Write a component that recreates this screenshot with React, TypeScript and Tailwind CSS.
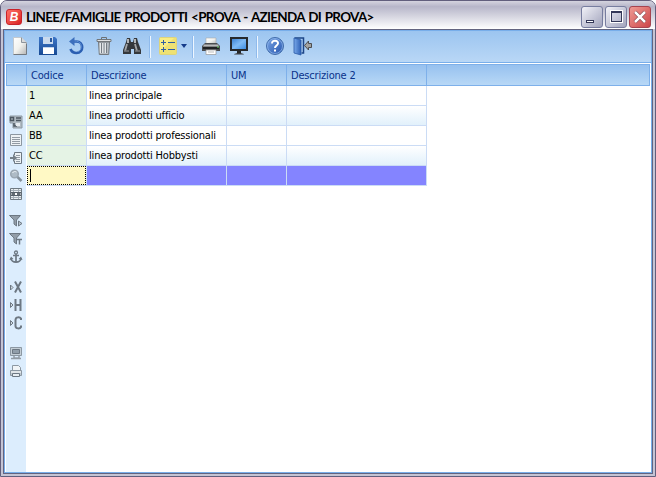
import React from "react";

type IconProps = { children: React.ReactNode };

const ToolIcon = ({ children }: IconProps) => (
  <button className="flex h-5 w-7 shrink-0 items-center justify-center">
    <svg width="20" height="20" viewBox="0 0 20 20" fill="none">{children}</svg>
  </button>
);

const SideIcon = ({ children }: IconProps) => (
  <button className="flex h-[18px] w-5 shrink-0 items-center justify-center">
    <svg width="14" height="14" viewBox="0 0 14 14" fill="none" stroke="#6d7883">{children}</svg>
  </button>
);

const Separator = () => (
  <div className="flex h-[22px] w-2 shrink-0 justify-center">
    <div className="w-px bg-[#8fbaec]" />
    <div className="w-px bg-[#eef6ff]" />
  </div>
);

const Gradients = () => (
  <svg width="0" height="0" className="absolute">
    <defs>
      <linearGradient id="paper" x1="0" y1="0" x2="1" y2="1">
        <stop stopColor="#ffffff" /><stop offset=".5" stopColor="#f2f2ee" /><stop offset="1" stopColor="#b5b5b5" />
      </linearGradient>
      <linearGradient id="blue" x1="0" y1="0" x2="0" y2="1">
        <stop stopColor="#3d76c8" /><stop offset="1" stopColor="#174993" />
      </linearGradient>
      <linearGradient id="help" x1="0" y1="0" x2="1" y2="1">
        <stop stopColor="#7ba6e4" /><stop offset="1" stopColor="#2454ad" />
      </linearGradient>
      <linearGradient id="screen" x1="0" y1="0" x2="1" y2="1">
        <stop stopColor="#3e83d4" /><stop offset=".5" stopColor="#7fbaf4" /><stop offset="1" stopColor="#3d8de3" />
      </linearGradient>
      <linearGradient id="door" x1="0" y1="0" x2="1" y2="0">
        <stop stopColor="#79a9ea" /><stop offset="1" stopColor="#2d60b5" />
      </linearGradient>
    </defs>
  </svg>
);

const Toolbar = () => (
  <div className="flex h-[31px] shrink-0 items-start bg-linear-to-b from-[#9cc5f0] to-[#b9d7f6] pt-[5px] pl-px">
    <ToolIcon>
      <path d="M3.5 1.5h8l5 5v12h-13z" fill="url(#paper)" stroke="#c3c9cf" />
      <path d="M11.5 1.5v5h5" fill="#d8dadc" stroke="#8d949c" />
      <path d="M3.5 18.5h13v-11" stroke="#737980" />
    </ToolIcon>
    <ToolIcon>
      <path d="M1 1h16l2 2v16H1z" fill="url(#blue)" />
      <path d="M5 1h10v7H5z" fill="#c9daee" /><path d="M12 2h2v4h-2z" fill="#28589e" />
      <path d="M5 11h11v7H5z" fill="#fff" /><path d="M5 11h11v1H5z" fill="#c1d4ed" />
    </ToolIcon>
    <ToolIcon>
      <path d="M7 5.5h3.5c7.5 0 7.5 11.5 0 11.5-3.5 0-5-1.5-6-4" stroke="#2b5fb2" strokeWidth="2.7" />
      <path d="M8 5c9-.5 9 9 4 10.5" stroke="#6b99da" strokeWidth=".8" />
      <path d="M8.5 1v9L3 5.5z" fill="#3c6fbd" />
    </ToolIcon>
    <ToolIcon>
      <path d="M4.5 6h11l-.8 12.5H5.3z" fill="#b7bdc3" stroke="#73797f" />
      <path d="M7.5 7v10m2.5-10v10m2.5-10v10" stroke="#757c84" />
      <path d="M6.3 7v10m2.5-10v10m2.5-10v10" stroke="#f1f3f4" />
      <path d="M3 3.5h14v2H3z" fill="#e1e3e5" stroke="#73777b" />
      <path d="M7.5 3V1.5h5V3" stroke="#6c7175" />
    </ToolIcon>
    <ToolIcon>
      <path d="M5 2h3l1 4h2l1-4h3l1 4 3 8v4h-7v-5H9v5H1v-4l3-8z" fill="#35383c" />
      <path d="M5 3h2v4H5zM12 3h2v4h-2z" fill="#b3b5b7" />
      <path d="M5 8 3 15m10-7 2 7" stroke="#a4a6a8" strokeWidth="1.8" />
      <path d="M2 15h5m6 0h5" stroke="#777a7e" strokeWidth="1.5" />
    </ToolIcon>
    <Separator />
    <button className="ml-1 flex h-5 w-[31px] shrink-0 items-center">
      <svg width="20" height="20" viewBox="0 0 20 20" fill="none">
        <rect x="1.5" y="1.5" width="17" height="17" rx="1" fill="#f9ed83" stroke="#ddd47d" />
        <path d="M2 16 16 2h2v16H2z" fill="#eee173" />
        <path d="M3 6.5h5M5.5 4v5M3 13.5h5M5.5 11v5M10 6.5h7m-7 7h7" stroke="#315fa2" />
      </svg>
      <svg width="6" height="4" viewBox="0 0 6 4" className="ml-[3px]"><path d="M0 0h6L3 4z" fill="#153b8a" /></svg>
    </button>
    <Separator />
    <ToolIcon>
      <path d="M5 2h10v6H5z" fill="url(#paper)" stroke="#aaa" strokeWidth=".6" />
      <path d="M4 7h12l3 3v5H1v-5z" fill="#4c4e51" />
      <path d="M3 8.5h14l1 2H2z" fill="#b9babb" /><path d="M2 12h16" stroke="#1f2123" strokeWidth="2" />
      <path d="M5 14h10v4.5H5z" fill="#fff" stroke="#999" strokeWidth=".7" /><path d="M7 16h6" stroke="#bbb" />
      <path d="M16 11h2" stroke="#6fdd6b" />
    </ToolIcon>
    <ToolIcon>
      <path d="M1 1h18v14H1z" fill="#26282b" /><path d="M3 3h14v10H3z" fill="url(#screen)" />
      <path d="M8 15h4v3H8z" fill="#25272a" /><path d="M5 18.5c1-2 9-2 10 0z" fill="#3b3c3f" />
    </ToolIcon>
    <Separator />
    <ToolIcon>
      <circle cx="10" cy="10" r="8.5" fill="url(#help)" stroke="#426dab" />
      <circle cx="10" cy="10" r="7.5" stroke="#91b7ec" strokeWidth=".7" />
      <path d="M7 7.5c0-4 6.5-3.5 6 0-.2 2-3 2-3 4.5" stroke="#fff" strokeWidth="2" /><path d="M9 13.5h2v2H9z" fill="#fff" />
    </ToolIcon>
    <ToolIcon>
      <path d="M1.5 2h9v15h-2" stroke="#1d4587" strokeWidth="1.5" /><path d="M1 2l7 2v15l-7-2z" fill="url(#door)" stroke="#2959a6" strokeWidth=".8" />
      <path d="M18.5 7.5v4h-3V14l-4-4.5 4-4.5v2.5z" fill="#a2a2a0" stroke="#4c4d50" />
    </ToolIcon>
  </div>
);

const Sidebar = () => (
  <div className="flex w-5 shrink-0 flex-col bg-[#dcedfd] pt-[27px]">
    <SideIcon>
      <path d="M1 1h12v12H4V8H1z" fill="#b1bbc3" stroke="#8d99a3" />
      <path d="M1.5 2.5h3v3h-3zM7 3h5M7 5.5h5M5 8v3h3" stroke="#4d5862" strokeWidth="1.5" />
      <path d="M7 8h4v3H7z" fill="#e6ecf0" stroke="none" />
    </SideIcon>
    <SideIcon><path d="M1.5 1.5h11v11h-11z" fill="#edf2f5" stroke="#8c97a1" /><path d="M3 4.5h8m-8 2h8m-8 2h8m-8 2h8" stroke="#929ba4" /></SideIcon>
    <SideIcon>
      <path d="M5.5 4V1.5h7v11h-7V10" fill="#edf2f5" /><path d="M7 4.5h4m-4 2h4m-4 2h4m-4 2h4" stroke="#929ba4" /><path d="M1 6h3V3l4 4-4 4V8H1z" fill="#758089" stroke="none" />
    </SideIcon>
    <SideIcon><circle cx="5.5" cy="5" r="3.8" fill="#aebbc6" stroke="#9ba7b2" strokeWidth="1.5" /><path d="m8.5 8 4 4" stroke="#84909b" strokeWidth="2.5" /><path d="M3.5 4c1-2 3-1.5 4-1" stroke="#eff5f8" /></SideIcon>
    <SideIcon>
      <path d="M1.5 1.5h11v11h-11z" fill="#e9eef1" stroke="#6e7982" /><path d="M2 3.5h10m-10 7h10M4.5 2v10m5-10v10" stroke="#a5afb7" /><path d="M2 5.5h10v3H2z" fill="#fff" stroke="#56606a" /><path d="M3 7h3m2 0h3" stroke="#303c46" strokeWidth="1.5" />
    </SideIcon>
    <div className="h-[9px]" />
    <SideIcon><path d="M.5 1.5h11L7.5 6v6L5 10V6z" fill="#929da8" /><path d="M9.5 7v5l3.5-2.5z" fill="#b9c5ce" /></SideIcon>
    <SideIcon><path d="M.5 1.5h11L7.5 6v6L5 10V6z" fill="#929da8" /><path d="M8 7.5h5m-2.5 0v5" strokeWidth="1.5" /></SideIcon>
    <SideIcon><circle cx="7" cy="2.5" r="1.5" strokeWidth="1.3" /><path d="M7 4v8M4 5.5h6" strokeWidth="1.7" /><path d="M2 8c0 5.5 10 5.5 10 0" strokeWidth="1.8" /><path d="M.5 10 2 6.5 4.5 9zm13 0L12 6.5 9.5 9z" fill="#6d7883" stroke="none" /></SideIcon>
    <div className="h-3" />
    <SideIcon><path d="M1.5 5v5L4 7.5z" fill="#d0dbe3" /><path d="m6 1.5 6 11m0-11-6 11" strokeWidth="2" /></SideIcon>
    <SideIcon><path d="M1.5 4.5v5L4 7z" fill="#d0dbe3" /><path d="M6.5 1v12m5-12v12m-5-6h5" strokeWidth="2" /></SideIcon>
    <SideIcon><path d="M1.5 4.5v5L4 7z" fill="#d0dbe3" /><path d="M12 4V2.5C11 1 6.5.5 6.5 4v6c0 3 4.5 3 5.5 1V9.5" strokeWidth="2" /></SideIcon>
    <div className="h-3" />
    <SideIcon><path d="M1.5 1.5h11v8h-11z" fill="#c4ced6" stroke="#8c98a3" /><path d="M3.5 3.5h7v4h-7z" fill="#919eaa" /><path d="M5 10v2h5v-2M2 12.5h10" stroke="#929ca5" strokeWidth="1.5" /></SideIcon>
    <SideIcon><path d="M3.5 6V1.5h6l2 2V6" fill="#f0f4f7" stroke="#8c98a3" /><path d="M1.5 6.5h11v5h-11z" fill="#c1cbd2" stroke="#8c98a3" /><path d="M2 8h10" stroke="#fff" /><path d="M3.5 9.5h7v3h-7z" fill="#e7edf1" /></SideIcon>
  </div>
);

const products = [
  ["1", "linea principale"],
  ["AA", "linea prodotti ufficio"],
  ["BB", "linea prodotti professionali"],
  ["CC", "linea prodotti Hobbysti"],
];

const columns = "grid w-[400px] grid-cols-[60px_140px_60px_140px]";

const HeaderCell = ({ label }: { label: string }) => (
  <div className="border-r border-[#7eb0ea] pt-1 pl-1">{label}</div>
);

const ProductGrid = () => (
  <div className="min-w-0 grow bg-white">
    {products.map(([code, description], index) => (
      <div key={code} className={`${columns} ml-px h-5 ${index % 2 ? "bg-linear-to-b from-white to-[#e0f0fb]" : "bg-white"}`}>
        <div className="border-r border-b border-[#cbdcf5] bg-[#e5f3e5] pt-[3px] pl-[2px]">{code}</div>
        <div className="border-r border-b border-[#cbdcf5] pt-[3px] pl-[2px]">{description}</div>
        <div className="border-r border-b border-[#cbdcf5]" />
        <div className="border-r border-b border-[#cbdcf5]" />
      </div>
    ))}
    <div className={`${columns} ml-px h-5 bg-[#8484ff]`}>
      <div className="border-r border-b border-[#cbdcf5] bg-white">
        <div className="h-[19px] border border-dotted border-black bg-[#fff9c5] pt-[2px] pl-[2px]"><div className="h-[13px] w-px bg-black" /></div>
      </div>
      <div className="border-r border-b border-[#cbdcf5]" />
      <div className="border-r border-b border-[#cbdcf5]" />
      <div className="border-r border-b border-[#cbdcf5]" />
    </div>
  </div>
);

export default function App() {
  return (
    <div className="h-[477px] w-[656px] overflow-hidden bg-white font-['DejaVu_Sans_Condensed','DejaVu_Sans',sans-serif] text-[11px] leading-[14px] tracking-[-0.18px] text-black [font-stretch:condensed]">
      <Gradients />
      <div className="flex h-full flex-col rounded-t-[7px] border border-[#625f7d] bg-[#c5c4d4]">
        <header className="flex h-[28px] shrink-0 items-center rounded-t-[6px] bg-linear-to-b from-[#d5d4df] via-[#b7b6c9] via-20% to-white pl-[5px] pr-1 pt-[3px]">
          <div className="flex h-4 w-4 shrink-0 items-center justify-center rounded-[3px] border border-[#c92229] bg-linear-to-br from-[#ff6e64] to-[#d91a22] font-['Liberation_Sans',sans-serif] text-[12px] font-bold text-white italic">B</div>
          <h1 className="ml-1 grow whitespace-nowrap font-['Lato',sans-serif] text-[13.5px] leading-4 font-bold tracking-[-0.73px] [font-stretch:normal] [word-spacing:1.2px]">LINEE/FAMIGLIE PRODOTTI &lt;PROVA - AZIENDA DI PROVA&gt;</h1>
          <div className="flex gap-0.5">
            <button className="flex h-[22px] w-[22px] rounded-[3px] border border-[#777d9f] bg-linear-to-br from-[#f2f2f8] to-[#a2a4bc]"><div className="mt-[13px] ml-1 h-[3px] w-2 border border-[#343858] bg-white" /></button>
            <button className="flex h-[22px] w-[22px] items-center justify-center rounded-[3px] border border-[#777d9f] bg-linear-to-br from-[#f2f2f8] to-[#a2a4bc]"><div className="h-[11px] w-[11px] border border-t-2 border-[#343858] outline outline-white" /></button>
            <button className="flex h-[22px] w-[22px] items-center justify-center rounded-[3px] border border-[#a64450] bg-linear-to-br from-[#ee9a94] to-[#cc4349]"><svg width="14" height="14" viewBox="0 0 14 14"><path d="m2 2 10 10M12 2 2 12" stroke="#743b45" strokeWidth="3.8" /><path d="m2 2 10 10M12 2 2 12" stroke="white" strokeWidth="2.5" /></svg></button>
          </div>
        </header>
        <div className="mx-0.5 mb-0.5 flex min-h-0 grow flex-col border border-[#636480] bg-[#78aeea]">
          <main className="flex min-h-0 grow flex-col border border-[#78aeea] bg-white">
            <Toolbar />
            <div className="h-px shrink-0 bg-[#78aeea]" />
            <div className="flex min-h-0 grow flex-col pt-px">
              <div className="ml-px mr-px flex h-[22px] shrink-0 border border-[#7eb0ea] bg-linear-to-b from-[#97c1ef] to-[#b8d8f6] text-[#09328a]">
                <div className="w-5 border-r border-[#7eb0ea]" />
                <div className={columns}>
                  <HeaderCell label="Codice" /><HeaderCell label="Descrizione" /><HeaderCell label="UM" /><HeaderCell label="Descrizione 2" />
                </div>
              </div>
              <div className="ml-px flex min-h-0 grow"><Sidebar /><ProductGrid /></div>
            </div>
          </main>
        </div>
      </div>
    </div>
  );
}
